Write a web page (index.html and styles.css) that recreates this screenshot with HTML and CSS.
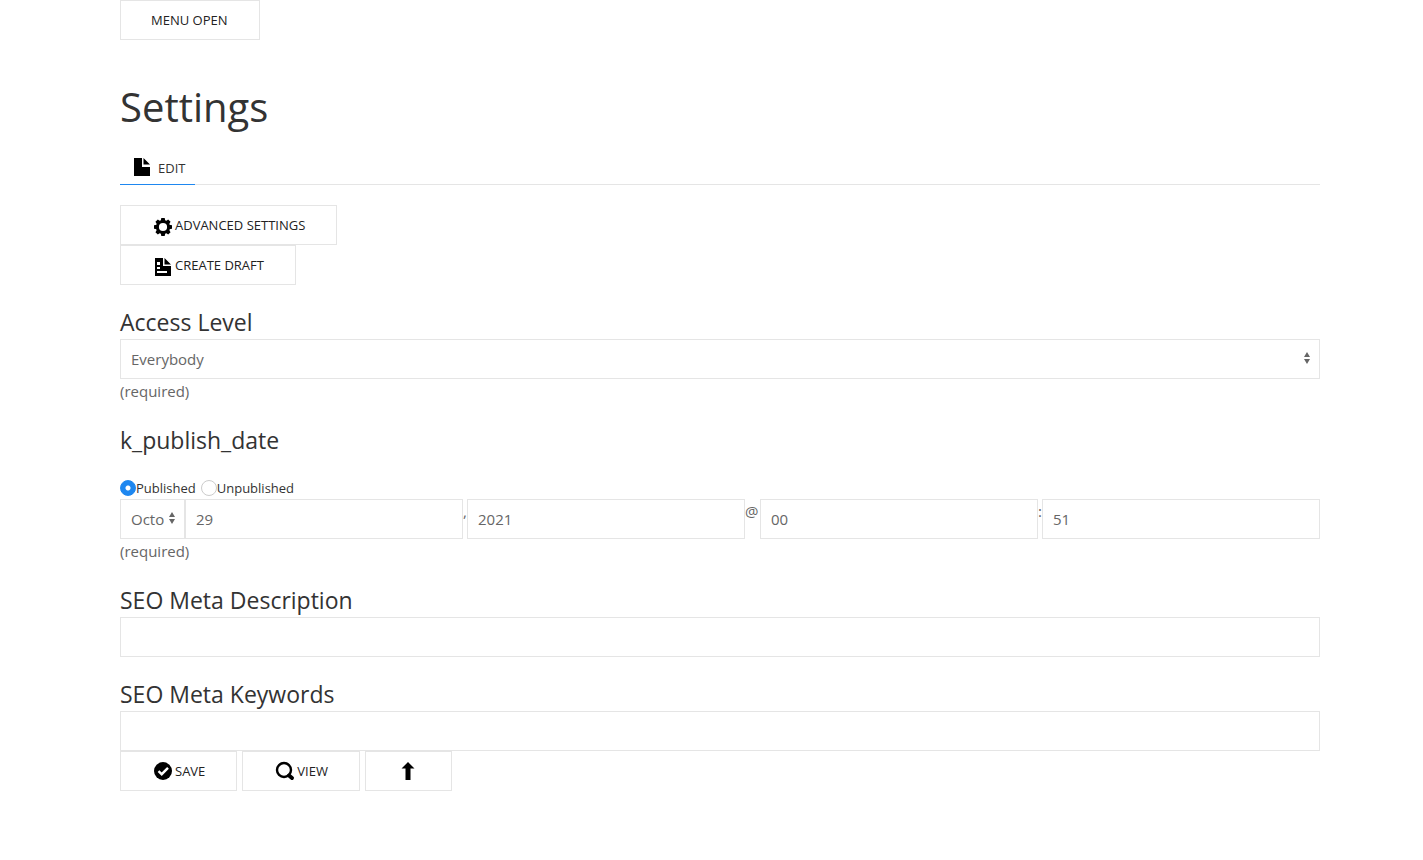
FILE: index.html
```html
<!DOCTYPE html>
<html lang="en">
<head>
<meta charset="utf-8">
<title>Settings</title>
<link rel="stylesheet" href="styles.css">
</head>
<body>
<main class="page">
  <button class="button" type="button">MENU OPEN</button>
  <h1 class="title">Settings</h1>
  <nav class="tabs">
    <a class="tab" href="#edit">
      <svg class="icon" viewBox="0 0 24 24" aria-hidden="true"><path d="M4 2h8v9h8v9H4zM13.500 2l6.500 6.500h-6.500z"/></svg>
      EDIT
    </a>
  </nav>
  <form class="form">
    <div class="actions-column">
      <button class="button" type="button">
        <svg class="icon" viewBox="0 0 24 24" aria-hidden="true"><g transform="translate(12 14)"><circle r="5.600" fill="none" stroke="#000" stroke-width="3"/><path d="M-1.700-9h3.400l.6 3h-4.600zM-1.700 9h3.400l.6-3h-4.600zM-9-1.700v3.400l3 .6v-4.600zM9-1.700v3.400l-3 .6v-4.600z"/><path transform="rotate(45)" d="M-1.700-9h3.400l.6 3h-4.600zM-1.700 9h3.400l.6-3h-4.600zM-9-1.700v3.400l3 .6v-4.600zM9-1.700v3.400l-3 .6v-4.600z"/></g></svg>
        ADVANCED SETTINGS
      </button>
      <button class="button" type="button">
        <svg class="icon" viewBox="0 0 24 24" aria-hidden="true"><path fill-rule="evenodd" d="M4 5h8v8h8v10H4zM13.500 5l6.500 6.500h-6.500zM6 9v3h3V9zM6 14v2h3v-2zM6 18v2h10v-2z"/></svg>
        CREATE DRAFT
      </button>
    </div>

    <section class="field">
      <h3 class="field-title"><label for="access">Access Level</label></h3>
      <select class="control select" id="access"><option>Everybody</option></select>
      <p class="note">(required)</p>
    </section>

    <section class="field">
      <h3 class="field-title">k_publish_date</h3>
      <div class="radios">
        <label class="choice"><input class="radio" type="radio" name="status" checked>Published</label>
        <label class="choice"><input class="radio" type="radio" name="status">Unpublished</label>
      </div>
      <div class="date-row">
        <select class="control select month" aria-label="Month"><option>October</option></select>
        <input class="control" type="text" value="29" aria-label="Day">
        <span class="separator">,</span>
        <input class="control" type="text" value="2021" aria-label="Year">
        <span class="separator wide">@</span>
        <input class="control" type="text" value="00" aria-label="Hour">
        <span class="separator">:</span>
        <input class="control" type="text" value="51" aria-label="Minute">
      </div>
      <p class="note">(required)</p>
    </section>

    <section class="field">
      <h3 class="field-title"><label for="description">SEO Meta Description</label></h3>
      <input class="control" type="text" id="description">
    </section>

    <section class="field">
      <h3 class="field-title"><label for="keywords">SEO Meta Keywords</label></h3>
      <input class="control" type="text" id="keywords">
    </section>

    <div class="actions-row">
      <button class="button" type="button">
        <svg class="icon" viewBox="0 0 24 24" aria-hidden="true"><circle cx="12" cy="12" r="9"/><path d="M7.500 12.200l3.200 3L17 8.800" fill="none" stroke="#fff" stroke-width="2.400"/></svg>
        SAVE
      </button>
      <button class="button" type="button">
        <svg class="icon" viewBox="0 0 24 24" aria-hidden="true"><circle cx="11" cy="11" r="7" fill="none" stroke="#000" stroke-width="2.400"/><path d="M16 16.500l3 2.500" fill="none" stroke="#000" stroke-width="4" stroke-linecap="round"/></svg>
        VIEW
      </button>
      <button class="button" type="button" aria-label="Back to top">
        <svg class="icon" viewBox="0 0 24 24" aria-hidden="true"><path d="M12 3l6.500 6.500H14.500V21h-5V9.500h-4z"/></svg>
      </button>
    </div>
  </form>
</main>
</body>
</html>
```
FILE: styles.css
```css
* {
  box-sizing: border-box;
}

body {
  margin: 0;
  background: #fff;
  color: #666;
  font: 15px/24px "Open Sans", "Noto Sans", sans-serif;
}

.page {
  padding: 0 103px 70px 120px;
}

.button {
  display: inline-flex;
  align-items: center;
  height: 40px;
  margin: 0;
  padding: 0 31px 0 30px;
  border: 1px solid #e5e5e5;
  background: transparent;
  color: #222;
  font: 13px/24px "Open Sans", "Noto Sans", sans-serif;
  white-space: nowrap;
}

.icon {
  flex: none;
  width: 24px;
  height: 24px;
  fill: #000;
}

.title {
  margin: 42px 0 20px;
  color: #333;
  font-size: 40px;
  font-weight: 400;
  line-height: 50px;
}

.tabs {
  display: flex;
  height: 33px;
  margin-bottom: 20px;
  border-bottom: 1px solid #e5e5e5;
}

.tab {
  display: flex;
  align-items: center;
  gap: 4px;
  height: 33px;
  padding: 0 10px;
  border-bottom: 1px solid #1e87f0;
  color: #333;
  font-size: 13px;
  text-decoration: none;
}

.actions-column {
  display: flex;
  flex-direction: column;
  align-items: flex-start;
  margin-bottom: 20px;
}

.actions-row {
  display: flex;
  gap: 5px;
}

.field + .field {
  margin-top: 20px;
}

.field-title {
  margin: 0;
  color: #333;
  font-size: 23px;
  font-weight: 400;
  line-height: 34px;
}

.control {
  display: block;
  width: 100%;
  min-width: 0;
  height: 40px;
  margin: 0;
  padding: 0 10px;
  border: 1px solid #e5e5e5;
  border-radius: 0;
  background: #fff;
  color: #666;
  font: inherit;
}

.select {
  appearance: none;
  padding-right: 20px;
  background: #fff url("data:image/svg+xml,%3Csvg xmlns='http://www.w3.org/2000/svg' width='24' height='16'%3E%3Cpath fill='%23666' d='M12 1l3 5H9zM12 13l3-5H9z'/%3E%3C/svg%3E") no-repeat right 50%;
}

.note {
  margin: 0;
}

.radios {
  display: flex;
  gap: 5px;
  height: 22px;
  margin-top: 20px;
}

.choice {
  display: flex;
  align-items: center;
  color: #333;
  font-size: 13px;
}

.radio {
  appearance: none;
  width: 16px;
  height: 16px;
  margin: 0;
  border: 1px solid #ccc;
  border-radius: 50%;
}

.radio:checked {
  border-color: #1e87f0;
  background: radial-gradient(circle, #fff 2px, #1e87f0 3px);
}

.date-row {
  display: flex;
}

.date-row .control {
  flex: 1;
}

.date-row .month {
  flex: none;
  width: 65px;
}

.separator {
  width: 4px;
}

.separator.wide {
  width: 15px;
}
```
